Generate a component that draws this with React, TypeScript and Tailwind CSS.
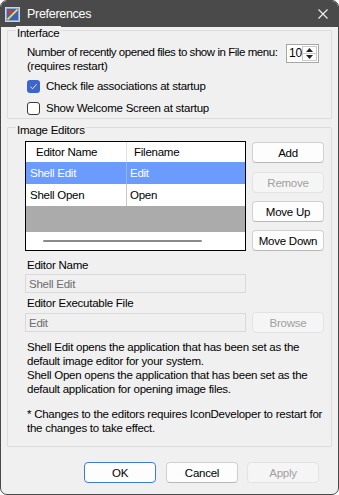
import React from "react";

function Btn({
  children,
  disabled,
  primary,
  className = "",
}: {
  children: React.ReactNode;
  disabled?: boolean;
  primary?: boolean;
  className?: string;
}) {
  const base =
    "h-[21px] w-[72px] rounded-[4px] border flex items-center justify-center text-[11.5px] leading-[14px] tracking-[-0.25px]";
  const style = disabled
    ? "bg-[#f5f5f5] border-[#e3e3e3] text-[#a0a0a0]"
    : primary
    ? "bg-[#fdfdfd] border-[#3c7bd6] text-black"
    : "bg-[#fdfdfd] border-[#d0d0d0] border-b-[#b8b8b8] text-black";
  return <div className={`${base} ${style} ${className}`}>{children}</div>;
}

function GroupLabel({ children }: { children: React.ReactNode }) {
  return (
    <span className="absolute left-[8px] top-[-5px] bg-[#f0f0f0] px-[1px] leading-[14px] text-black">
      {children}
    </span>
  );
}

function TitleIcon() {
  return (
    <svg width="15" height="15" viewBox="0 0 15 15">
      <rect x="0.5" y="0.5" width="14" height="14" fill="#8fa7d6" stroke="#c9d4ea" />
      <rect x="2" y="2" width="11" height="11" fill="#3a62b5" />
      <path d="M2.5 12.5 L12.5 2.5" stroke="#e8c24a" strokeWidth="2" />
      <path d="M3 12 L12 3" stroke="#f7e7a0" strokeWidth="0.6" />
      <circle cx="5" cy="5" r="2.2" fill="#d23a2a" />
    </svg>
  );
}

function Spinner() {
  return (
    <div className="h-[19px] w-[33px] border border-[#a6a6a6] bg-white flex">
      <span className="pl-[2px] text-[12px] leading-[17px] tracking-[-0.2px]">10</span>
      <div className="ml-auto flex flex-col w-[15px] m-[1px] border border-[#c8c8c8]">
        <div className="flex-1 flex items-center justify-center border-b border-[#c8c8c8]">
          <svg width="7" height="4" viewBox="0 0 7 4">
            <path d="M0 4 L3.5 0 L7 4 Z" fill="#222" />
          </svg>
        </div>
        <div className="flex-1 flex items-center justify-center">
          <svg width="7" height="4" viewBox="0 0 7 4">
            <path d="M0 0 L3.5 4 L7 0 Z" fill="#222" />
          </svg>
        </div>
      </div>
    </div>
  );
}

export default function App() {
  return (
    <div className="w-[339px] h-[495px] bg-white font-['Liberation_Sans',Arial,sans-serif] text-[11.5px] tracking-[-0.25px] text-black">
      <div className="w-full h-full flex flex-col rounded-[7px] overflow-hidden border border-[#4a4a4a] bg-[#f0f0f0]">
        {/* Title bar */}
        <div className="h-[26px] bg-[#4a4a4a] flex items-center pl-[4px] pr-[10px] shrink-0">
          <TitleIcon />
          <span className="ml-[7px] text-white text-[12.5px] tracking-[-0.3px] leading-[16px]">
            Preferences
          </span>
          <svg className="ml-auto" width="10" height="10" viewBox="0 0 10 10">
            <path d="M0.5 0.5 L9.5 9.5 M9.5 0.5 L0.5 9.5" stroke="#f2f2f2" strokeWidth="1.1" />
          </svg>
        </div>

        {/* Body */}
        <div className="flex flex-col px-[6px]">
          {/* Interface */}
          <div className="relative mt-[3px] border border-[#dcdcdc] rounded-[1px] pt-[13px] pb-[3px] pl-[19px] pr-[12px]">
            <GroupLabel>Interface</GroupLabel>
            <div className="flex items-start h-[29px]">
              <div className="pt-[1px] leading-[14px] whitespace-nowrap">
                <div className="tracking-[-0.45px]">Number of recently opened files to show in File menu:</div>
                <div>(requires restart)</div>
              </div>
              <div className="ml-auto">
                <Spinner />
              </div>
            </div>
            <div className="mt-[6px] h-[14px] flex items-center">
              <div className="w-[13px] h-[13px] rounded-[3px] bg-[#3d66cc] flex items-center justify-center">
                <svg width="9" height="9" viewBox="0 0 9 9">
                  <path d="M1.5 4.8 L3.6 6.8 L7.6 2.3" stroke="white" strokeWidth="0.9" fill="none" />
                </svg>
              </div>
              <span className="ml-[6px] leading-[14px]">Check file associations at startup</span>
            </div>
            <div className="mt-[8px] h-[14px] flex items-center">
              <div className="w-[13px] h-[13px] rounded-[3px] border border-[#3a3a3a] bg-white" />
              <span className="ml-[6px] leading-[14px]">Show Welcome Screen at startup</span>
            </div>
          </div>

          {/* Image Editors */}
          <div className="relative mt-[8px] border border-[#dcdcdc] rounded-[1px] pt-[13px] pb-[11px] pl-[17px] pr-[7px]">
            <GroupLabel>Image Editors</GroupLabel>
            <div className="flex">
              {/* Table */}
              <div className="w-[221px] h-[110px] border border-black bg-white flex flex-col">
                <div className="h-[20px] flex bg-white">
                  <div className="w-[100px] pl-[10px] flex items-center leading-[14px]">Editor Name</div>
                  <div className="w-[1px] bg-[#e0e0e0]" />
                  <div className="flex-1 pl-[7px] flex items-center leading-[14px]">Filename</div>
                </div>
                <div className="h-[22px] flex bg-[#6b9bfd] text-white">
                  <div className="w-[100px] pl-[4px] flex items-center leading-[14px]">Shell Edit</div>
                  <div className="w-[1px] bg-[#8fb3fd]" />
                  <div className="flex-1 pl-[3px] flex items-center leading-[14px]">Edit</div>
                </div>
                <div className="h-[22px] flex bg-white">
                  <div className="w-[100px] pl-[4px] flex items-center leading-[14px]">Shell Open</div>
                  <div className="w-[1px] bg-[#c8c8c8]" />
                  <div className="flex-1 pl-[3px] flex items-center leading-[14px]">Open</div>
                </div>
                <div className="h-[26px] bg-[#ababab]" />
                <div className="h-[18px] bg-white flex items-center pl-[17px]">
                  <div className="w-[159px] h-[2px] rounded-full bg-[#8a8a8a]" />
                </div>
              </div>
              {/* Buttons */}
              <div className="ml-[6px] flex flex-col">
                <Btn className="mt-[1px]">Add</Btn>
                <Btn disabled className="mt-[9px]">Remove</Btn>
                <Btn className="mt-[8px]">Move Up</Btn>
                <Btn className="mt-[8px]">Move Down</Btn>
              </div>
            </div>

            <div className="mt-[7px] pl-[2px] leading-[14px]">Editor Name</div>
            <div className="mt-[2px] w-[221px] h-[19px] border border-[#d9d9d9] bg-[#f0f0f0] pl-[3px] flex items-center text-[#6d6d6d] leading-[14px]">
              Shell Edit
            </div>
            <div className="mt-[3px] pl-[2px] leading-[14px]">Editor Executable File</div>
            <div className="mt-[2px] flex items-center h-[21px]">
              <div className="w-[221px] h-[19px] border border-[#d9d9d9] bg-[#f0f0f0] pl-[3px] flex items-center text-[#6d6d6d] leading-[14px]">
                Edit
              </div>
              <Btn disabled className="ml-[6px]">Browse</Btn>
            </div>
            <div className="mt-[7px] pl-[2px] leading-[14px]">
              <div>Shell Edit opens the application that has been set as the</div>
              <div>default image editor for your system.</div>
              <div>Shell Open opens the application that has been set as the</div>
              <div>default application for opening image files.</div>
            </div>
            <div className="mt-[11px] pl-[2px] leading-[14px]">
              <div>* Changes to the editors requires IconDeveloper to restart for</div>
              <div>the changes to take effect.</div>
            </div>
          </div>

          {/* Bottom buttons */}
          <div className="mt-[15px] flex justify-end gap-[9px] pr-[13px]">
            <Btn primary className="mr-[1px]">OK</Btn>
            <Btn>Cancel</Btn>
            <Btn disabled>Apply</Btn>
          </div>
        </div>
      </div>
    </div>
  );
}
